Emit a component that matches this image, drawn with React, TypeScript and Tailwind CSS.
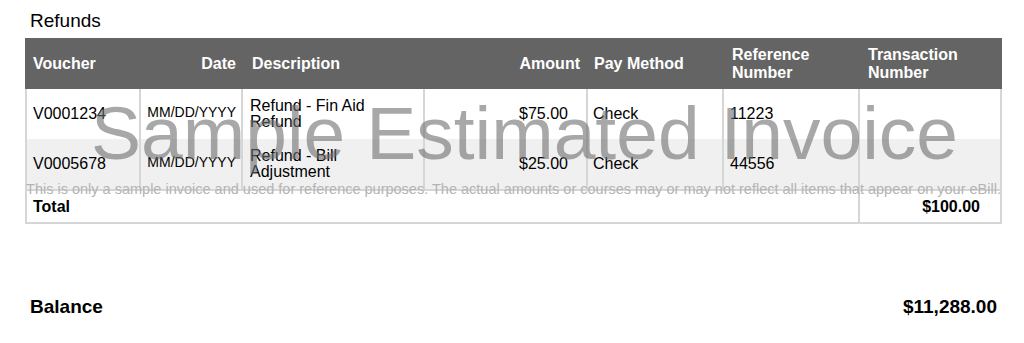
const cols = 'grid grid-cols-[114px_102px_182px_163px_136px_136px_140px]';

const rows = [
	{ voucher: 'V0001234', date: 'MM/DD/YYYY', desc: ['Refund - Fin Aid', 'Refund'], amount: '$75.00', method: 'Check', ref: '11223', bg: 'bg-white' },
	{ voucher: 'V0005678', date: 'MM/DD/YYYY', desc: ['Refund - Bill', 'Adjustment'], amount: '$25.00', method: 'Check', ref: '44556', bg: 'bg-[#f0f0f0]' },
];

const cell = 'flex items-center border-r-2 border-[#d6d6d6]';

export default function App() {
	return (
		<div className="w-[1024px] h-[343px] bg-white pt-[11px] font-['Liberation_Sans',Arial,sans-serif] text-black overflow-hidden">
			<h2 className="pl-[30px] text-[19px] leading-[19px]">Refunds</h2>

			<div className="relative ml-[25px] mt-[8px] w-[977px]">
				{/* header */}
				<div className="grid grid-cols-[116px_102px_182px_163px_136px_136px_142px] h-[51px] bg-[#646464] text-white font-bold text-[16px] leading-[18px]">
					<div className="flex items-center pl-[8px]">Voucher</div>
					<div className="flex items-center justify-end pr-[7px]">Date</div>
					<div className="flex items-center pl-[9px]">Description</div>
					<div className="flex items-center justify-end pr-[8px]">Amount</div>
					<div className="flex items-center pl-[6px]">Pay Method</div>
					<div className="flex items-center pl-[8px]">Reference<br />Number</div>
					<div className="flex items-center pl-[8px]">Transaction<br />Number</div>
				</div>

				{/* body */}
				<div className="border-x-2 border-b-2 border-[#d6d6d6] text-[16px]">
					{rows.map((r) => (
						<div key={r.voucher} className={`${cols} h-[50px] ${r.bg}`}>
							<div className={`${cell} pl-[6px]`}>{r.voucher}</div>
							<div className={`${cell} justify-end pr-[5px] text-[14px] pb-[4px]`}>{r.date}</div>
							<div className={`${cell} pl-[7px] leading-[16px]`}>
								<span>
									{r.desc[0]}
									<br />
									{r.desc[1]}
								</span>
							</div>
							<div className={`${cell} justify-end pr-[18px]`}>{r.amount}</div>
							<div className={`${cell} pl-[5px]`}>{r.method}</div>
							<div className={`${cell} pl-[6px]`}>{r.ref}</div>
							<div className="flex items-center" />
						</div>
					))}
					<div className="grid grid-cols-[833px_140px] h-[33px] border-t-2 border-[#d6d6d6] font-bold">
						<div className="flex items-center pl-[6px] border-r-2 border-[#d6d6d6]">Total</div>
						<div className="flex items-center justify-end pr-[20px]">$100.00</div>
					</div>
				</div>

				{/* watermark */}
				<div className="pointer-events-none absolute left-[66px] top-[58px] text-[75px] leading-[75px] whitespace-nowrap text-[rgba(110,110,110,0.6)]">
					Sample Estimated Invoice
				</div>
				<div className="pointer-events-none absolute left-0 right-0 top-[144px] text-center text-[14.5px] leading-[14px] whitespace-nowrap text-[#b4b4b4]">
					This is only a sample invoice and used for reference purposes. The actual amounts or courses may or may not reflect all items that appear on your eBill.
				</div>
			</div>

			<div className="flex justify-between pl-[30px] pr-[27px] mt-[73px] text-[19px] leading-[19px] font-bold">
				<span>Balance</span>
				<span>$11,288.00</span>
			</div>
		</div>
	);
}
